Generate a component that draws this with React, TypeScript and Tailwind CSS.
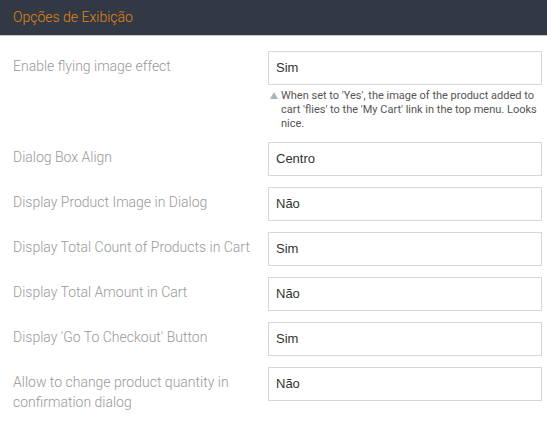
import React from "react";

type Row = { label: string; value: string; help?: string };

const rows: Row[] = [
  {
    label: "Enable flying image effect",
    value: "Sim",
    help: "When set to 'Yes', the image of the product added to cart 'flies' to the 'My Cart' link in the top menu. Looks nice.",
  },
  { label: "Dialog Box Align", value: "Centro" },
  { label: "Display Product Image in Dialog", value: "Não" },
  { label: "Display Total Count of Products in Cart", value: "Sim" },
  { label: "Display Total Amount in Cart", value: "Não" },
  { label: "Display 'Go To Checkout' Button", value: "Sim" },
  { label: "Allow to change product quantity in confirmation dialog", value: "Não" },
];

export default function App() {
  return (
    <div className="w-[547px] h-[433px] bg-white overflow-hidden" style={{ fontFamily: "Roboto, 'Liberation Sans', sans-serif" }}>
      <div className="h-[36px] bg-[#333944] border-b border-[#c8c8cc] flex items-center px-[13px]">
        <span className="text-[14px] font-light text-[#e0850f]">Opções de Exibição</span>
      </div>
      <div className="pt-[15px] flex flex-col gap-[11px]">
        {rows.map((r) => (
          <div key={r.label} className="flex">
            <div className="w-[268px] shrink-0 pl-[13px] pr-[12px] pt-[5px] text-[14px] leading-[20px] font-light text-[#999]">
              {r.label}
            </div>
            <div className="w-[274px] shrink-0">
              <div
                className="h-[34px] border border-[#d6d6d6] flex items-center pl-[7px] text-[13px] text-[#333]"
                style={{ fontFamily: "'Liberation Sans', Arial, sans-serif" }}
              >
                {r.value}
              </div>
              {r.help && (
                <div className="flex mt-[4px] text-[11px] leading-[14px] text-[#555]">
                  <span className="w-[12px] shrink-0 flex justify-center pt-[3px]">
                    <svg width="8" height="7" viewBox="0 0 8 7">
                      <path d="M4 0L8 7H0Z" fill="#aab4bc" />
                    </svg>
                  </span>
                  <span className="pl-[1px]">{r.help}</span>
                </div>
              )}
            </div>
          </div>
        ))}
      </div>
    </div>
  );
}
